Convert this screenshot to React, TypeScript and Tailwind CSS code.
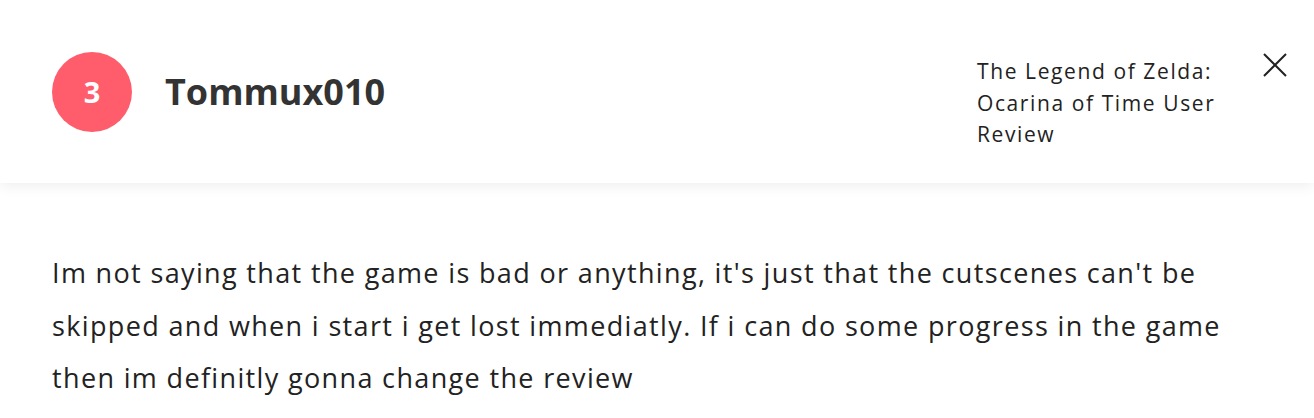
import React from "react";

export default function App() {
  return (
    <div className="w-[1314px] h-[418px] bg-white overflow-hidden" style={{ fontFamily: "'Open Sans', sans-serif" }}>
      <div className="relative h-[183px] flex items-center pl-[52px] pr-[26px] shadow-[0_2px_14px_rgba(0,0,0,0.08)]">
        <div className="w-[80px] h-[80px] rounded-full bg-[#ff5c6c] flex items-center justify-center text-white text-[29px] font-bold">3</div>
        <div className="ml-[33px] text-[36px] font-bold text-[#333333] tracking-[0px]">Tommux010</div>
        <div className="ml-auto self-start mt-[56px] w-[262px] text-[21px] leading-[31.5px] tracking-[1.6px] text-[#222222]">
          The Legend of Zelda: Ocarina of Time User Review
        </div>
        <div className="self-start mt-[50px] ml-[21px] mr-[-2px] w-[30px] h-[30px] flex items-center justify-center">
          <svg width="24" height="24" viewBox="0 0 24 24" fill="none" stroke="#222" strokeWidth="2">
            <path d="M1 1 L23 23 M23 1 L1 23" />
          </svg>
        </div>
      </div>
      <div className="px-[52px] pt-[64px] text-[27px] leading-[52.5px] tracking-[1.35px] text-[#222222]">
        Im not saying that the game is bad or anything, it's just that the cutscenes can't be skipped and when i start i get lost immediatly. If i can do some progress in the game then im definitly gonna change the review
      </div>
    </div>
  );
}
